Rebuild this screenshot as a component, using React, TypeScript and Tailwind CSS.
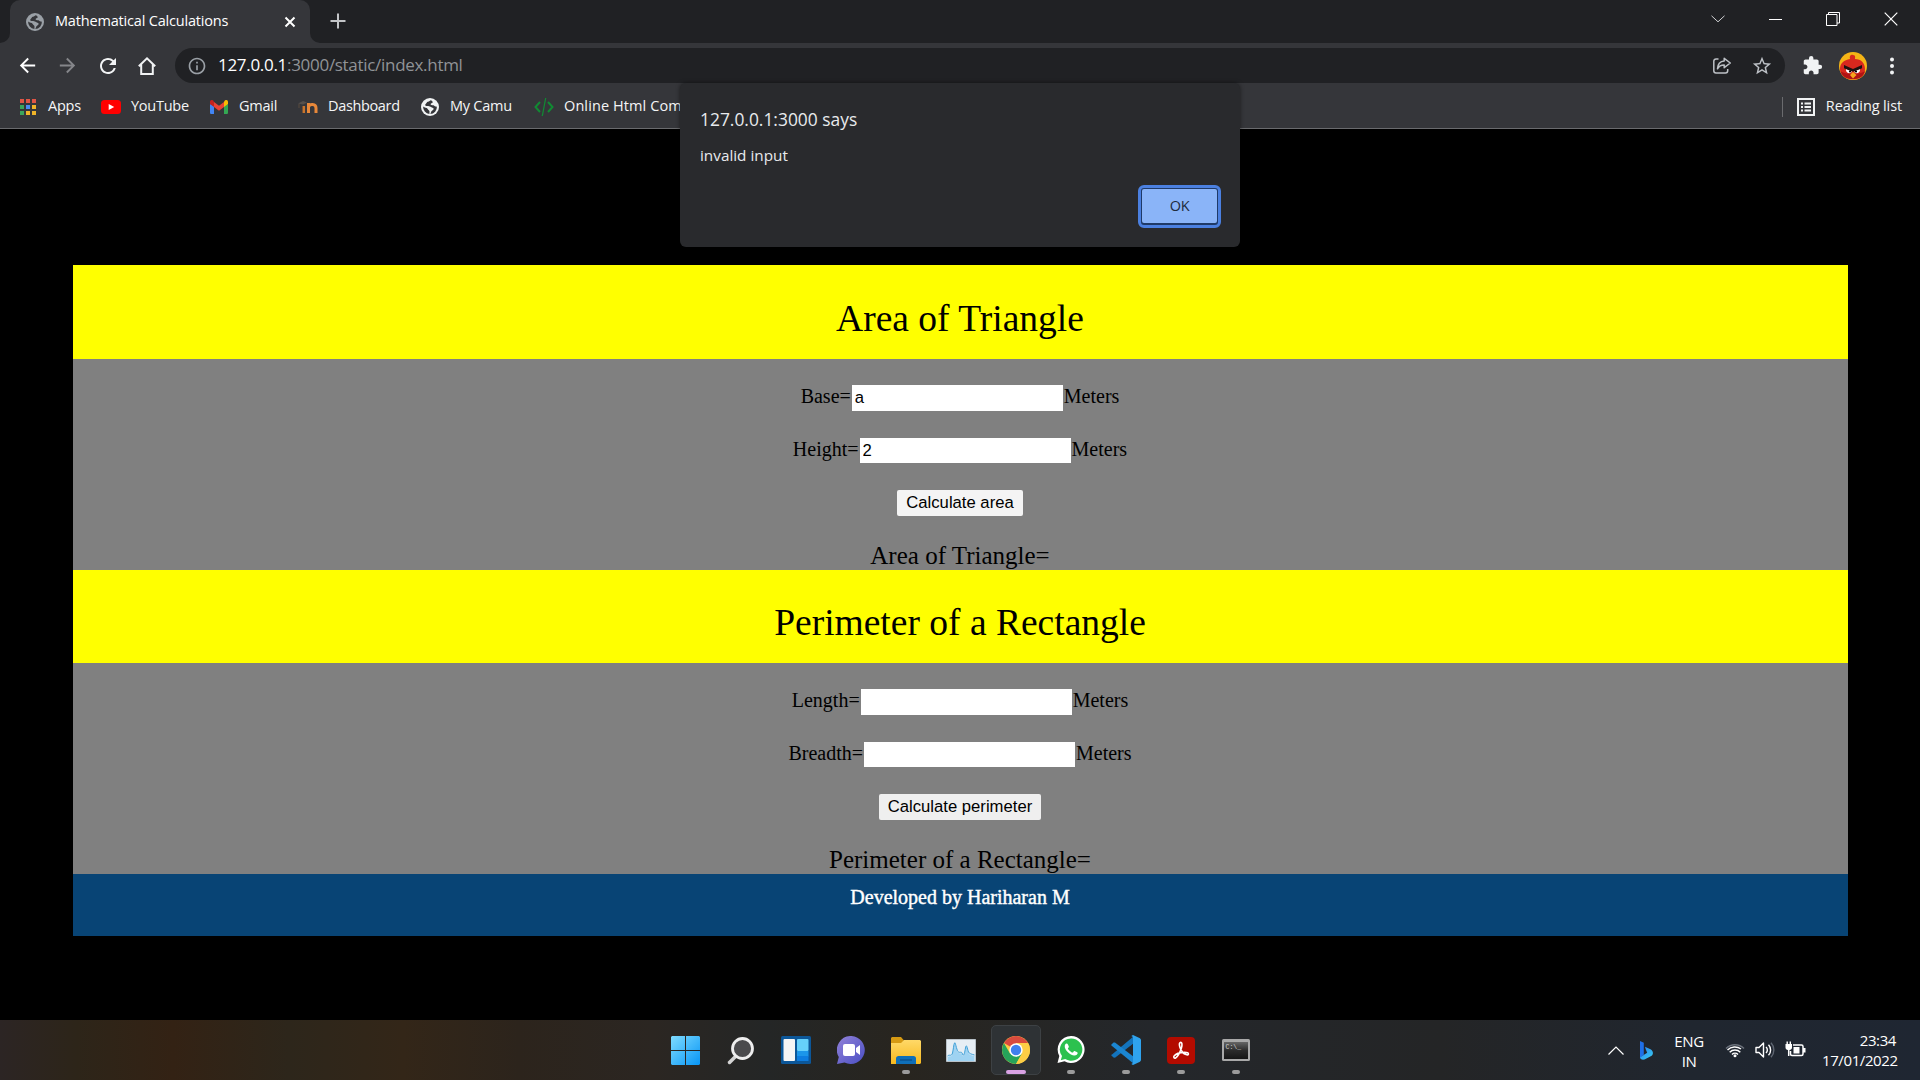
import type { ReactNode } from "react";
import { MdArrowBack, MdArrowForward, MdExtension, MdInfoOutline, MdRefresh, MdStarBorder } from "react-icons/md";

function Globe({ fill, hole }: { fill: string; hole: string }) {
  return (
    <svg width="18" height="18" viewBox="0 0 18 18">
      <circle cx="9" cy="9" r="9" fill={fill} />
      <path
        d="M10 2.200C8.800 2.500 8.400 3.400 6.900 3.700 5.500 4 5.800 5.200 4.700 5.900c-.9.6-.5 2 .8 2 1.600 0 3.100-.1 4 .9 1 1.200 3 .6 3.100 2 .1 1.500-1.900 1.700-2.500 2.900-.3.800-.4 1.600-.8 2.300A7 7 0 0 0 15.900 8.600c-1.200.2-2.300-.3-2.900-1-.8-.9-2.300.1-3.100-.8-.8-1 .1-1.700 1.300-1.900 1-.2.500-2-1.200-2.700Z"
        fill={hole}
      />
      <path d="M2.100 8.600C3.500 9.900 5.900 9.600 6.700 10.900c.6 1.100 1.800 1.300 1.800 2.500l-.1 2.500A7 7 0 0 1 2.100 8.600Z" fill={hole} />
    </svg>
  );
}

function Tab() {
  return (
    <div className="relative ml-[10px] flex h-[43px] w-[300px] items-center rounded-t-[10px] bg-[#35363a] pl-4">
      <svg className="absolute bottom-0 -left-[10px]" width="10" height="10">
        <path d="M10 0v10H0A10 10 0 0 0 10 0Z" fill="#35363a" />
      </svg>
      <svg className="absolute -right-[10px] bottom-0" width="10" height="10">
        <path d="M0 0v10h10A10 10 0 0 1 0 0Z" fill="#35363a" />
      </svg>
      <Globe fill="#9aa0a6" hole="#35363a" />
      <span className="mb-[2px] ml-[11px] w-[219px] text-[14.5px] leading-5 tracking-[-0.18px] text-white">Mathematical Calculations</span>
      <svg width="12" height="12" className="ml-[10px]" viewBox="0 0 12 12">
        <path d="m1.500 1.500 9 9m0-9-9 9" stroke="#fff" strokeWidth="2" />
      </svg>
    </div>
  );
}

function TabStrip() {
  return (
    <div className="flex h-[43px] bg-[#202124]">
      <Tab />
      <svg width="16" height="16" viewBox="0 0 16 16" className="mt-[13px] ml-[20px]">
        <path d="M8 .5v15M.5 8h15" stroke="#c3c5c8" strokeWidth="2" />
      </svg>
      <div className="mt-[11px] ml-auto mr-[22px] flex h-4 items-center">
        <svg width="14" height="8" viewBox="0 0 14 8" className="mr-[44px]">
          <path d="m.5.8 6.500 6 6.500-6" fill="none" stroke="#d0d1d3" strokeWidth="1" />
        </svg>
        <span className="mr-[44px] h-px w-[13px] bg-white" />
        <svg width="14" height="14" viewBox="0 0 14 14" className="mr-[44px]" fill="none" stroke="#fff">
          <path d="M.5 2.500h10.500v11H.5zM2.500 2.500V.5h11V11h-2.500" />
        </svg>
        <svg width="14" height="14" viewBox="0 0 14 14">
          <path d="m.7.7 12.600 12.600m0-12.600L.7 13.300" stroke="#fff" strokeWidth="1.200" />
        </svg>
      </div>
    </div>
  );
}

function Avatar() {
  return (
    <svg width="28" height="28" viewBox="0 0 28 28">
      <clipPath id="avatar">
        <circle cx="14" cy="14" r="14" />
      </clipPath>
      <g clipPath="url(#avatar)">
        <path fill="#f5b416" d="M0 0h28v28H0z" />
        <path fill="#e8801a" d="M0 20h28v8H0z" />
        <path fill="#d8281e" d="M11 7c-1-3 1-5 3-4 3 0 2 3 2 4 6 0 10 4 10 10 0 7-5 10-12 10S1 24 1 17C1 11 5 8 11 7Z" />
        <path fill="#b01414" d="M1.500 19c2 7 8 8 12.500 8s10-1 12-8c-4 4-20 4-24.500 0Z" />
        <path fill="#fff" d="m7 17 6 2c-1 3-5 3-6-.5Zm14 0-6 2c1 3 5 3 6-.5Z" />
        <path fill="#1b1110" d="m5 13 9 4 9-4v3.200l-8 3.300h-2l-8-3.300Z" />
        <circle cx="11" cy="19.500" r="1.100" />
        <circle cx="17" cy="19.500" r="1.100" />
        <path fill="#f6a51d" d="m14 20 3.500 3-3.500 3.500L11 23Z" />
      </g>
    </svg>
  );
}

function Toolbar() {
  return (
    <div className="flex h-[42px] items-center bg-[#35363a] pt-[3px] pl-[16px] pr-[17px]">
      <MdArrowBack className="size-[23px] text-white" />
      <MdArrowForward className="ml-[17px] size-[23px] text-[#85868a]" />
      <MdRefresh className="ml-[17px] size-[24px] text-[#f1f3f4]" />
      <svg width="24" height="24" viewBox="0 0 24 24" className="ml-[15px]" fill="none" stroke="#f1f3f4" strokeWidth="2">
        <path d="M6.200 10.500V20h11.600v-9.500M3.800 12.200 12 4.300l8.200 7.900" />
      </svg>
      <div className="ml-[16px] flex h-[35px] w-[1610px] items-center rounded-full bg-[#202124] pl-[12px]">
        <MdInfoOutline className="size-[20px] text-[#9aa0a6]" />
        <span className="mb-px ml-[11px] text-[17px] leading-6 tracking-[-0.3px] whitespace-nowrap text-[#909397]">
          <span className="text-white">127.0.0.1</span>:3000/static/index.html
        </span>
        <svg width="20" height="20" viewBox="0 0 20 20" className="ml-auto mr-[19px]" fill="none" stroke="#bdc1c6" strokeWidth="1.500" strokeLinejoin="round">
          <path d="M6.500 3H4a2.200 2.200 0 0 0-2.200 2.200v9.600A2.200 2.200 0 0 0 4 17h9.500a2.200 2.200 0 0 0 2.200-2.200V13" />
          <path d="M12.200 2.300 18.300 7l-6.100 4.700V9C9 9 6.800 10.300 5.500 12.800 5.700 8.300 8.300 5.300 12.200 5Z" />
        </svg>
        <MdStarBorder className="mr-[12px] size-[22px] text-[#bdc1c6]" />
      </div>
      <MdExtension className="ml-[17px] size-[21px] text-[#f1f3f4]" />
      <span className="ml-[16px]">
        <Avatar />
      </span>
      <svg width="4" height="18" viewBox="0 0 4 18" className="ml-[23px]" fill="#f1f3f4">
        <circle cx="2" cy="2.500" r="2" />
        <circle cx="2" cy="9" r="2" />
        <circle cx="2" cy="15.500" r="2" />
      </svg>
    </div>
  );
}

const appDots = ["#e05545", "#e05545", "#e05545", "#3ba55c", "#4a8af4", "#f0b429", "#3ba55c", "#f0b429", "#f0b429"];

function Bookmark({ icon, label, className }: { icon: ReactNode; label: string; className: string }) {
  return (
    <div className={`flex shrink-0 items-center ${className}`}>
      {icon}
      <span className="mb-[2px] whitespace-nowrap">{label}</span>
    </div>
  );
}

function Bookmarks() {
  return (
    <div className="flex h-[44px] items-center border-b border-[#6a6b6e] bg-[#35363a] pl-[20px] text-[14.500px] tracking-[-0.250px] text-[#f4f5f6]">
      <Bookmark
        className="w-[81px] gap-[12px]"
        label="Apps"
        icon={
          <svg width="16" height="16" viewBox="0 0 16 16">
            {appDots.map((c, i) => (
              <rect key={i} x={(i % 3) * 6} y={Math.floor(i / 3) * 6} width="4" height="4" fill={c} />
            ))}
          </svg>
        }
      />
      <Bookmark
        className="w-[109px] gap-[10px]"
        label="YouTube"
        icon={
          <svg width="20" height="14" viewBox="0 0 20 14">
            <rect width="20" height="14" rx="3.500" fill="#f00" />
            <path d="m7.700 4 5.500 3-5.500 3Z" fill="#fff" />
          </svg>
        }
      />
      <Bookmark
        className="w-[88px] gap-[11px]"
        label="Gmail"
        icon={
          <svg width="18" height="14" viewBox="0 0 18 14">
            <path d="M0 4v8.700C0 13.500.6 14 1.300 14H4V6Z" fill="#4285f4" />
            <path d="M18 4v8.700c0 .8-.6 1.300-1.300 1.300H14V6Z" fill="#34a853" />
            <path d="M14 2v5l4-3V2c0-2-2-2.500-3.200-1.600Z" fill="#fbbc04" />
            <path d="M4 7V2l5 3.800L14 2v5l-5 3.800Z" fill="#ea4335" />
            <path d="M0 2v2l4 3V2L3.200.4C2 -.5 0 0 0 2Z" fill="#c5221f" />
          </svg>
        }
      />
      <Bookmark
        className="w-[123px] gap-[10px] tracking-[-0.350px]"
        label="Dashboard"
        icon={
          <svg width="20" height="14" viewBox="0 0 20 14" fill="none">
            <path d="M0 3.500 5 1l4 1.500-4 2Z" fill="#55504c" />
            <path d="M1 4v4" stroke="#5b4a3c" />
            <path d="M5.800 13V6" stroke="#c9752c" strokeWidth="2.500" />
            <path d="M10.500 13V3m0 4c1-3.500 7.500-3.500 7.500 1v5" stroke="#e8883a" strokeWidth="3" />
          </svg>
        }
      />
      <Bookmark className="w-[113px] gap-[11px]" label="My Camu" icon={<Globe fill="#f1f3f4" hole="#35363a" />} />
      <Bookmark
        className="gap-[10px] tracking-[0.1px]"
        label="Online Html Com"
        icon={
          <svg width="20" height="20" viewBox="0 0 20 20" fill="none" stroke="#118a33" strokeWidth="2">
            <path d="m6 5-4.500 5L6 15M14 5l4.500 5-4.500 5" />
            <path d="M11.700 1 8.300 19" strokeWidth="1.300" />
          </svg>
        }
      />
      <span className="ml-auto h-5 w-px bg-[#6a6b6e]" />
      <Bookmark
        className="mr-[18px] ml-[14px] gap-[11px] tracking-[-0.120px]"
        label="Reading list"
        icon={
          <svg width="18" height="18" viewBox="0 0 18 18" fill="none" stroke="#f1f3f4" strokeWidth="2">
            <path d="M1 1h16v16H1z" />
            <path d="M4 5.500h2M4 9h2m-2 3.500h2M7.500 5.500H14M7.500 9H14m-6.500 3.500H14" strokeWidth="1.800" />
          </svg>
        }
      />
    </div>
  );
}

function AlertDialog() {
  return (
    <div className="absolute top-[83px] left-[680px] flex h-[163.500px] w-[560px] flex-col rounded-[6px] bg-[#292a2d] px-[20px] shadow-[0_0_4px_rgba(0,0,0,0.5)]">
      <p className="mt-[24px] text-[17.400px] leading-6 text-[#e8eaed]">127.0.0.1:3000 says</p>
      <p className="mt-[14px] text-[15.300px] leading-5 text-[#e8eaed]">invalid input</p>
      <button className="mt-[20px] -mr-px flex h-[43px] w-[83px] items-center justify-center self-end rounded-[6px] border-[3px] border-[#4b80e0] bg-[#1f3a68] p-px pb-[2px] text-[14.500px] tracking-[-0.3px] text-[#202b3c]">
        <span className="flex size-full items-center justify-center rounded-[2px] bg-[#8ab4f8]">OK</span>
      </button>
    </div>
  );
}

function Field({ label, value, inputClass }: { label: string; value: string; inputClass: string }) {
  return (
    <div className="flex h-[53px] items-start justify-center">
      <span>{label}=</span>
      <input
        readOnly
        value={value}
        className={`mx-px w-[211px] bg-white pr-[4px] pl-[3px] font-['Liberation_Sans',Arial,sans-serif] text-[16.667px] ${inputClass}`}
      />
      <span>Meters</span>
    </div>
  );
}

type CalculatorProps = {
  title: string;
  fields: [string, string][];
  action: string;
  headingClass: string;
  buttonClass: string;
};

const inputSizes = ["mt-[2px] h-[26px]", "mt-[2px] h-[25px]"];

function Calculator({ title, fields, action, headingClass, buttonClass }: CalculatorProps) {
  return (
    <section>
      <h1 className={`bg-[#ffff00] text-center text-[37.500px] leading-[43px] ${headingClass}`}>{title}</h1>
      <div className="h-[211px] bg-[#808080] pt-[24px] text-[20px] leading-[26px]">
        {fields.map(([label, value], i) => (
          <Field key={label} label={label} value={value} inputClass={inputSizes[i]} />
        ))}
        <div className="flex h-[52px] justify-center pt-px">
          <button
            className={`h-[26px] rounded-[2px] pb-px font-['Liberation_Sans',Arial,sans-serif] text-[16.667px] leading-[25px] ${buttonClass}`}
          >
            {action}
          </button>
        </div>
        <p className="text-center text-[25px] leading-[29px]">{title}=</p>
      </div>
    </section>
  );
}

function Page() {
  return (
    <main className="h-[891px] bg-black px-[72.500px] pt-[136px] font-['Liberation_Serif','Times_New_Roman',serif] text-black">
      <Calculator
        title="Area of Triangle"
        fields={[["Base", "a"], ["Height", "2"]]}
        action="Calculate area"
        headingClass="h-[94px] pt-[32px]"
        buttonClass="w-[126px] bg-[#f4f4f4]"
      />
      <Calculator
        title="Perimeter of a Rectangle"
        fields={[["Length", ""], ["Breadth", ""]]}
        action="Calculate perimeter"
        headingClass="h-[93px] pt-[31px]"
        buttonClass="w-[162px] bg-[#efefef]"
      />
      <footer className="h-[62px] bg-[#084475] pt-[11px] text-center text-[20px] leading-[24px] text-white [-webkit-text-stroke:0.400px_white]">
        Developed by Hariharan M
      </footer>
    </main>
  );
}

function TaskItem({ children, running, active }: { children: ReactNode; running?: boolean; active?: boolean }) {
  return (
    <div
      className={`relative flex size-[50px] items-center justify-center rounded-[5px] ${active ? "border border-[#3d4144] bg-[#2e3235]" : ""}`}
    >
      {children}
      {active && <span className="absolute bottom-0 h-[4px] w-[20px] rounded-full bg-[#d9a2e4]" />}
      {running && <span className="absolute bottom-[1px] h-[4px] w-[8px] rounded-full bg-[#9b9b9b]" />}
    </div>
  );
}

function TaskIcons() {
  return (
    <div className="ml-[661px] flex gap-[5px]">
      <TaskItem>
        <svg width="29" height="29" viewBox="0 0 29 29" className="mr-px">
          <linearGradient id="win" x1="0" y1="0" x2="29" y2="29" gradientUnits="userSpaceOnUse">
            <stop stopColor="#7fdcff" />
            <stop offset="1" stopColor="#0795f5" />
          </linearGradient>
          <path fill="url(#win)" d="M1 0h13v14H0V1ZM15 0h13l1 1v13H15ZM0 15h14v14H1l-1-1ZM15 15h14v13l-1 1H15Z" />
        </svg>
      </TaskItem>
      <TaskItem>
        <svg width="28" height="29" viewBox="0 0 28 29">
          <path d="m2.500 26.500 7-7" stroke="#d4d4d4" strokeWidth="3.500" strokeLinecap="round" />
          <circle cx="15.500" cy="12.500" r="10" fill="#4b4b4d" stroke="#eeeeee" strokeWidth="2.800" />
        </svg>
      </TaskItem>
      <TaskItem>
        <svg width="30" height="28" viewBox="0 0 30 28">
          <rect width="30" height="28" rx="1.500" fill="#0c5799" />
          <rect x="2.500" y="3" width="11.500" height="22" rx="1" fill="#f5f5f5" />
          <rect x="16" y="3" width="11.500" height="12" rx="1" fill="#66d0fb" />
          <path fill="#1b96ea" d="M16 15h11.500v5.500H16z" />
          <path fill="#0d7de0" d="M16 20h11.500v5H16z" />
        </svg>
      </TaskItem>
      <TaskItem>
        <svg width="29" height="29" viewBox="0 0 29 29">
          <linearGradient id="chat" x1="0" y1="0" x2="1" y2="1">
            <stop stopColor="#9282d8" />
            <stop offset="1" stopColor="#4a4fc4" />
          </linearGradient>
          <path fill="url(#chat)" d="M14.500 0a14 14 0 1 1-7 26.500L0 28l1.800-7A14 14 0 0 1 14.500 0Z" />
          <rect x="6" y="8" width="12" height="12" rx="2" fill="#fff" />
          <path fill="#fff" d="m19 12 4-3v10l-4-3Z" />
        </svg>
      </TaskItem>
      <TaskItem running>
        <svg width="30" height="27" viewBox="0 0 30 27">
          <linearGradient id="folder" x1="0" y1="0" x2="0" y2="1">
            <stop stopColor="#ffd968" />
            <stop offset="1" stopColor="#f7b91e" />
          </linearGradient>
          <path fill="#d69a13" d="M1 0h9l3 3.500V8H0V1Z" />
          <path fill="url(#folder)" d="M0 6h10l3-3h16l1 1v22l-1 1H0Z" />
          <path fill="#0f6fb8" d="M5 27v-5.500C5 20 6 19 7.500 19h15c1.500 0 2.500 1 2.500 2.500V27Z" />
          <path stroke="#0a4a86" strokeWidth="1.200" d="M9 23h12" />
        </svg>
      </TaskItem>
      <TaskItem>
        <svg width="30" height="23" viewBox="0 0 30 23">
          <path fill="#e6eef4" stroke="#b9c2c9" d="M.5.500h29v22H.5z" />
          <path fill="#9fd3f2" d="M1.500 18c2-2 4 1 5-3s1-8 2-10 2 8 4 9 3-1 4 2 2 0 3-6 2 2 3 4 3 2 6 3v5h-27Z" />
          <path fill="none" stroke="#3c9fd8" d="M1.500 17c2-2 4 1 5-3s1-8 2-10 2 8 4 9 3-1 4 2 2 0 3-6 2 2 3 4 3 2 6 3" />
        </svg>
      </TaskItem>
      <TaskItem active>
        <svg width="28" height="28" viewBox="0 0 28 28">
          <circle cx="14" cy="14" r="14" fill="#fccd45" />
          <path fill="#d94b3e" d="M14 14 1.900 7A14 14 0 0 1 26.100 7H14Z" />
          <path fill="#26a45a" d="M1.900 7A14 14 0 0 0 14 28l6-10.500L14 14 8 17.500Z" />
          <path fill="#fccd45" d="m20 17.500-6 10.500A14 14 0 0 0 26.100 7H14Z" />
          <circle cx="14" cy="14" r="6.700" fill="#fff" />
          <circle cx="14" cy="14" r="5.200" fill="#3f80ee" />
        </svg>
      </TaskItem>
      <TaskItem running>
        <svg width="28" height="28" viewBox="0 0 28 28">
          <path fill="#fff" d="M14 0a13.500 13.500 0 1 1-6.500 25.300L.5 27l1.800-7A13.500 13.500 0 0 1 14 0Z" />
          <path fill="#2cc14f" d="M14 2.400a11.200 11.200 0 1 1-5.800 20.700l-4.400 1.200 1.200-4.200A11.200 11.200 0 0 1 14 2.400Z" />
          <path
            fill="#fff"
            d="M10 7.500c-.6-.3-1.200 0-1.700.7-2.500 3.500 3.400 10.500 8.700 11.300 2 .3 3.700-1 3.800-2.700 0-.4-3-1.900-3.500-1.900-.6.1-1.100 1.600-1.700 1.700-1.300 0-4.500-2.900-4.700-4.100 0-.5 1-1.100 1-1.700 0-.3-1.200-3.100-1.900-3.300Z"
          />
        </svg>
      </TaskItem>
      <TaskItem running>
        <svg width="30" height="30" viewBox="0 0 30 30">
          <path fill="#1374bd" d="m0 20 2.500 2.500 1.500.2L23 8V1L1 19.500Z" />
          <path fill="#1b86d2" d="m0 10 2.500-2.500L4 7.400 23 22v7L1 11Z" />
          <path fill="#2fa3ee" d="M22 0 29 3.200l1 1.500v20.600l-1 1.500L22 30l-1.700-1 1.700-1V2l-1.700-1Z" />
        </svg>
      </TaskItem>
      <TaskItem running>
        <svg width="28" height="27" viewBox="0 0 28 27">
          <rect width="28" height="27" rx="4" fill="#b30b00" />
          <path
            d="M13.300 5.500c1.800-.6 2.200 2 1 6-1.200 3.500-3.700 8-5.500 9.300-1.500 1-2.800-.5-1.500-2 1.500-1.800 6-3.200 9.700-3.400 3.500-.1 4.700.7 4.400 1.800-.6 1.500-3.800.3-6-2.100-2-2.400-4.300-8.800-2.100-9.600Z"
            fill="none"
            stroke="#fff"
            strokeWidth="1.600"
          />
        </svg>
      </TaskItem>
      <TaskItem running>
        <svg width="28" height="22" viewBox="0 0 28 22">
          <linearGradient id="term" x1="0" y1="0" x2="0" y2="1">
            <stop stopColor="#666" />
            <stop offset=".5" stopColor="#2b2b2b" />
            <stop offset="1" stopColor="#161616" />
          </linearGradient>
          <rect width="28" height="22" rx="1.500" fill="#a9a9a9" />
          <path fill="url(#term)" d="M2 3h24v17H2z" />
          <text x="3.500" y="10" fontSize="6.500" fill="#d0d0d0" fontFamily="Liberation Mono, monospace">
            C:\_
          </text>
        </svg>
      </TaskItem>
    </div>
  );
}

function Tray() {
  return (
    <div className="ml-auto flex items-center pr-[24px] text-[15px] leading-[20px] tracking-[-0.400px] text-white">
      <svg width="16" height="9" viewBox="0 0 16 9" fill="none" stroke="#fff" strokeWidth="1.200">
        <path d="M.5 8.500 8 1l7.500 7.500" />
      </svg>
      <svg width="14" height="19" viewBox="0 0 14 19" className="ml-[15px]">
        <linearGradient id="bing" x1="0" y1="0" x2="1" y2="1">
          <stop stopColor="#2a7bf0" />
          <stop offset="1" stopColor="#39d0f0" />
        </linearGradient>
        <path fill="#1f6fe8" d="m1 0 3.800 1.800v12L1 17Z" />
        <path fill="url(#bing)" d="M1 16.500 5 13.800l3.200-2L6.600 8l-.6-2.300 5.500 2.600c3 1.700 3.200 5 .7 6.800L5.500 18.500C3 19 1 18 1 16.500Z" />
      </svg>
      <div className="mt-px ml-[21px] w-[30px] text-center">
        <p>ENG</p>
        <p>IN</p>
      </div>
      <svg width="20" height="16" viewBox="0 0 20 16" className="ml-[21px]" fill="none" stroke="#fff" strokeWidth="1.500">
        <path d="M1 6.500a12.700 12.700 0 0 1 18 0" stroke="#6a707a" />
        <path d="M2.500 8a10.500 10.500 0 0 1 13.500-1M4.700 10.200a7.500 7.500 0 0 1 10.600 0M7 12.500a4.300 4.300 0 0 1 6 0" />
        <circle cx="10" cy="13.700" r="1.500" fill="#fff" stroke="none" />
      </svg>
      <svg width="20" height="18" viewBox="0 0 20 18" className="ml-[10px]" fill="none" stroke="#fff" strokeWidth="1.400">
        <path d="M1 6.500h3L8.500 2v14L4 11.500H1Z" strokeLinejoin="round" />
        <path d="M11 6a4 4 0 0 1 0 6M13.500 3.800a7.500 7.500 0 0 1 0 10.400" />
        <path d="M16 1.800a10.500 10.500 0 0 1 0 14.400" stroke="#5f6672" />
      </svg>
      <svg width="21" height="18" viewBox="0 0 21 18" className="ml-[10px]" fill="none" stroke="#fff" strokeWidth="1.500">
        <path d="M8 4h8.500c.8 0 1.500.7 1.500 1.500v7.500c0 .8-.7 1.500-1.500 1.500H7c-.8 0-1.500-.7-1.500-1.500V10" />
        <path fill="#fff" stroke="none" d="M8.500 6h6v6.500h-6zM18 7h2.500v4.500H18zM.5 3H7v3.500C7 8 6 9 4.500 9h-1.500C1.500 9 .5 8 .5 6.500zM1.500.5h1.400V3H1.500zM4.600.5H6V3H4.600z" />
        <path d="M3.700 9v6" />
      </svg>
      <div className="ml-[16px] w-[74px] text-right">
        <p>23:34</p>
        <p>17/01/2022</p>
      </div>
    </div>
  );
}

function Taskbar() {
  return (
    <footer className="flex h-[60px] items-center bg-[linear-gradient(90deg,#2c2524_0%,#2d2519_4%,#332214_9%,#2d261b_15%,#332618_21%,#2c241c_27%,#2b2622_34%,#242626_40%,#28251f_47%,#24272b_60%,#242526_75%,#20262f_88%,#1f2632_100%)]">
      <TaskIcons />
      <Tray />
    </footer>
  );
}

export default function App() {
  return (
    <div className="relative h-[1080px] w-[1920px] overflow-hidden bg-black font-['Open_Sans','Noto_Sans',sans-serif]">
      <TabStrip />
      <Toolbar />
      <Bookmarks />
      <AlertDialog />
      <Page />
      <Taskbar />
    </div>
  );
}
